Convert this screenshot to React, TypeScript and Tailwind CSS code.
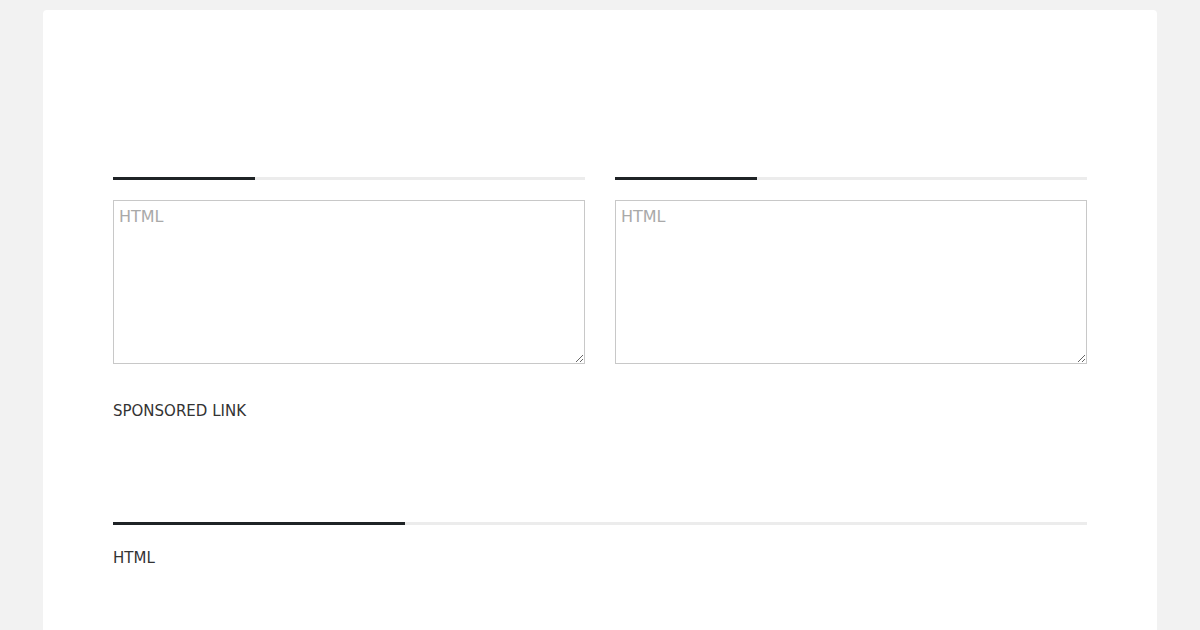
const Bar = ({ dark }: { dark: string }) => (
  <div className="flex h-[3px] w-full bg-[#ececec]">
    <div className={`h-full bg-[#1f2326] ${dark}`} />
  </div>
);

const HtmlBox = () => (
  <div className="flex flex-col">
    <Bar dark="w-[142px]" />
    <textarea
      placeholder="HTML"
      className="mt-[20px] h-[164px] w-full border border-[#c8c8c8] px-[5px] py-[4px] text-[16px] text-[#333] outline-none placeholder:text-[#a9a9a9]"
    />
  </div>
);

export default function App() {
  return (
    <div className="min-h-[630px] bg-[#f2f2f2] px-[43px] pt-[10px] font-['DejaVu_Sans',sans-serif]">
      <div className="h-[620px] rounded-t-[4px] bg-white px-[70px] pt-[167px]">
        <div className="grid grid-cols-2 gap-[30px]">
          <HtmlBox />
          <HtmlBox />
        </div>
        <p className="mt-[37px] text-[15px] leading-[20px] text-[#333]">SPONSORED LINK</p>
        <div className="mt-[101px]">
          <Bar dark="w-[292px]" />
        </div>
        <p className="mt-[23px] text-[15px] leading-[20px] text-[#333]">HTML</p>
      </div>
    </div>
  );
}
